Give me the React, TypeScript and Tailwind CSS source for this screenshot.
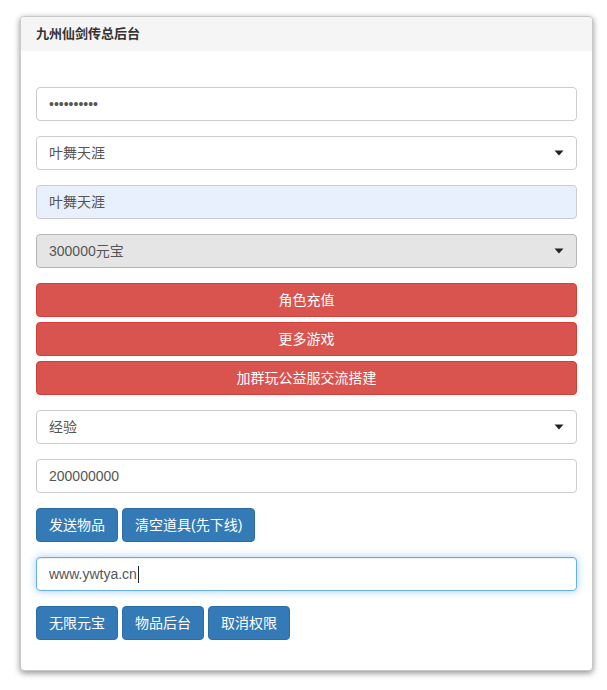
import React from "react";

const cjk = { fontFamily: '"Liberation Sans", "Noto Sans CJK SC", sans-serif' };

function Caret() {
  return (
    <svg width="10" height="6" viewBox="0 0 10 6" className="absolute right-[12px] top-1/2 -translate-y-1/2">
      <path d="M0.5 0.5 L9.5 0.5 L5 5.5 Z" fill="#222" />
    </svg>
  );
}

function Field({ children, className = "", select = false }: { children: React.ReactNode; className?: string; select?: boolean }) {
  return (
    <div
      className={
        "relative flex h-[34px] items-center rounded-[4px] border px-[12px] text-[14px] text-[#555] " +
        className
      }
    >
      {children}
      {select && <Caret />}
    </div>
  );
}

function RedBtn({ children }: { children: React.ReactNode }) {
  return (
    <div className="flex h-[34px] items-center justify-center rounded-[4px] border border-[#d43f3a] bg-[#d9534f] text-[14px] text-white">
      {children}
    </div>
  );
}

function BlueBtn({ children }: { children: React.ReactNode }) {
  return (
    <div className="flex h-[34px] items-center rounded-[4px] border border-[#2e6da4] bg-[#337ab7] px-[12px] text-[14px] text-white">
      {children}
    </div>
  );
}

export default function App() {
  return (
    <div className="min-h-[690px] bg-white pt-[16px]" style={cjk}>
      <div className="ml-[20px] w-[573px] overflow-hidden rounded-[4px] border border-[#c8c8c8] bg-white shadow-[0_2px_6px_rgba(0,0,0,0.45)]">
        <div className="flex h-[34px] items-center bg-[#f5f5f5] px-[15px] text-[13px] font-bold text-[#333]">
          九州仙剑传总后台
        </div>
        <div className="px-[15px] pb-[30px] pt-[36px]">
          <input
            type="password"
            value="xxxxxxxxxx"
            readOnly
            className="block h-[34px] w-full rounded-[4px] border border-[#ccc] px-[12px] text-[14px] text-[#555] outline-none"
          />
          <div className="mt-[15px]">
            <Field className="border-[#ccc] bg-white" select>
              叶舞天涯
            </Field>
          </div>
          <div className="mt-[15px]">
            <Field className="border-[#ccc] bg-[#e8f0fe] text-[#222]">叶舞天涯</Field>
          </div>
          <div className="mt-[15px]">
            <Field className="border-[#b5b5b5] bg-[#e5e5e5] text-[#444]" select>
              300000元宝
            </Field>
          </div>
          <div className="mt-[15px] flex flex-col gap-[5px]">
            <RedBtn>角色充值</RedBtn>
            <RedBtn>更多游戏</RedBtn>
            <RedBtn>加群玩公益服交流搭建</RedBtn>
          </div>
          <div className="mt-[15px]">
            <Field className="border-[#ccc] bg-white" select>
              经验
            </Field>
          </div>
          <div className="mt-[15px]">
            <Field className="border-[#ccc] bg-white">200000000</Field>
          </div>
          <div className="mt-[15px] flex gap-[4px]">
            <BlueBtn>发送物品</BlueBtn>
            <BlueBtn>清空道具(先下线)</BlueBtn>
          </div>
          <div className="mt-[15px]">
            <Field className="border-[#66afe9] bg-white shadow-[inset_0_1px_1px_rgba(0,0,0,0.075),0_0_8px_rgba(102,175,233,0.6)]">
              www.ywtya.cn
              <span className="ml-px inline-block h-[17px] w-px bg-[#222]" />
            </Field>
          </div>
          <div className="mt-[15px] flex gap-[4px]">
            <BlueBtn>无限元宝</BlueBtn>
            <BlueBtn>物品后台</BlueBtn>
            <BlueBtn>取消权限</BlueBtn>
          </div>
        </div>
      </div>
    </div>
  );
}
